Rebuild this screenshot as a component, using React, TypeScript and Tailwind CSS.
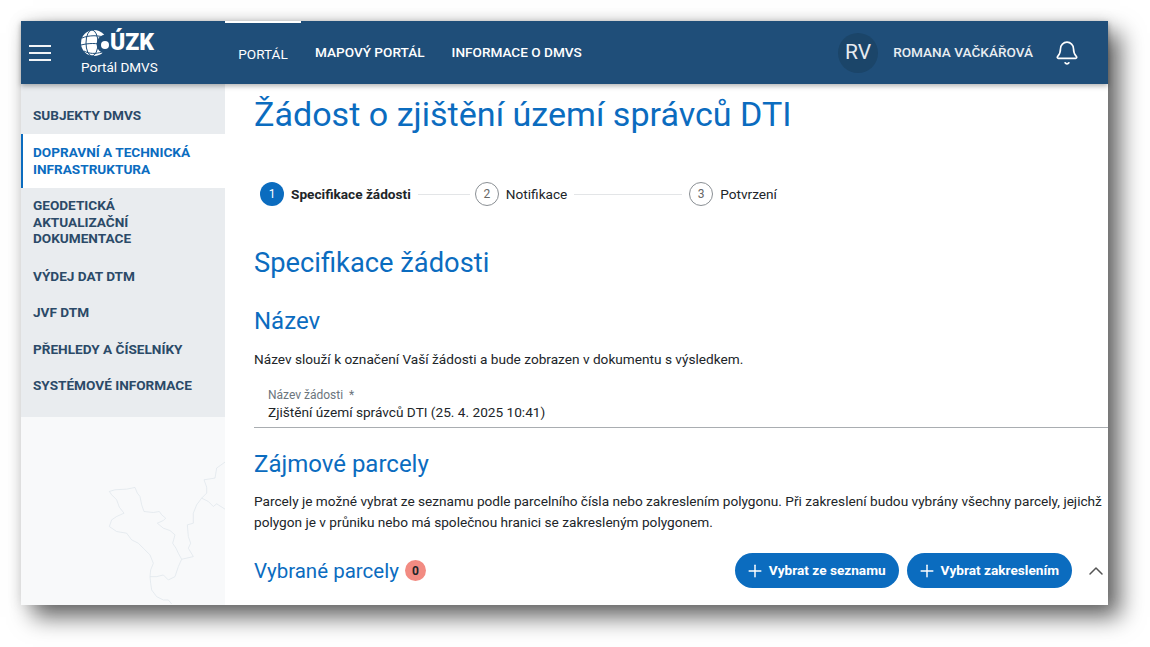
import { Bell, ChevronUp, Plus } from "lucide-react";

const sideItems = [
    { label: ["SUBJEKTY DMVS"] },
    { label: ["DOPRAVNÍ A TECHNICKÁ", "INFRASTRUKTURA"], active: true },
    { label: ["GEODETICKÁ", "AKTUALIZAČNÍ", "DOKUMENTACE"] },
    { label: ["VÝDEJ DAT DTM"] },
    { label: ["JVF DTM"] },
    { label: ["PŘEHLEDY A ČÍSELNÍKY"] },
    { label: ["SYSTÉMOVÉ INFORMACE"] },
];

function Logo() {
    return (
        <svg width="29" height="26" viewBox="0 0 29 26" className="shrink-0">
            <circle cx="13" cy="13" r="13" fill="#fff" />
            <g fill="none" stroke="#1f4e79" strokeWidth="1">
                <ellipse cx="11" cy="13" rx="6" ry="13" />
                <path d="M1 8 C8 5 18 5 25 8" />
                <path d="M0 15 C8 13 16 13 22 15" />
                <path d="M3 21 C8 24 15 24 21 22" />
            </g>
            <circle cx="25" cy="14" r="9.5" fill="#1f4e79" />
            <circle cx="24" cy="15" r="4" fill="#fff" />
        </svg>
    );
}

function Step({ n, text, current }: { n: number; text: string; current?: boolean }) {
    return (
        <div className="flex items-center gap-[7px]">
            <div
                className={
                    current
                        ? "flex h-6 w-6 items-center justify-center rounded-full bg-[#0b6cbf] text-xs text-white"
                        : "flex h-6 w-6 items-center justify-center rounded-full border border-[#8a8f94] text-xs text-[#666]"
                }
            >
                {n}
            </div>
            <span className={current ? "text-[13.65px] font-bold text-[#212529]" : "text-[13.65px] text-[#212529]"}>{text}</span>
        </div>
    );
}

function AddButton({ text }: { text: string }) {
    return (
        <button className="flex h-[35px] items-center gap-[4px] rounded-full bg-[#0b6cbf] pl-[10px] pr-[13px] text-[13.65px] font-bold text-white">
            <Plus size={20} strokeWidth={1.75} />
            {text}
        </button>
    );
}

export default function App() {
    return (
        <div className="h-[647px] w-[1150px] overflow-hidden bg-white pl-[21px] pt-[21px] font-['Roboto',sans-serif]">
            <div className="flex h-[584px] w-[1087px] flex-col bg-white shadow-[12px_12px_22px_rgba(0,0,0,0.6),0_0_14px_rgba(0,0,0,0.1)]">
                <header className="relative z-10 flex h-[63px] shrink-0 items-center bg-[#1f4e79] text-white shadow-[0_2px_5px_rgba(0,0,0,0.3)]">
                    <div className="flex w-[204px] items-center">
                        <svg width="22" height="16" viewBox="0 0 22 16" className="ml-[8px]" stroke="#f1f4f7" strokeWidth="2">
                            <path d="M0 1 H22 M0 8 H22 M0 15 H22" />
                        </svg>
                        <div className="ml-[30px] flex flex-col">
                            <div className="flex h-[26px] items-center">
                                <Logo />
                                <span className="text-[23px] font-black leading-none">ÚZK</span>
                            </div>
                            <span className="mt-[2px] text-[13.5px] leading-[18px]">Portál DMVS</span>
                        </div>
                    </div>
                    <nav className="flex h-full text-[13.6px] font-medium">
                        <a className="flex h-full w-[76px] items-center justify-center border-t-2 border-white pt-[2px] font-normal">PORTÁL</a>
                        <a className="flex h-full items-center pl-[14px] pr-[13px]">MAPOVÝ PORTÁL</a>
                        <a className="flex h-full items-center pl-[14px] pr-[13px]">INFORMACE O DMVS</a>
                    </nav>
                    <div className="ml-auto flex items-center pr-[28px]">
                        <div className="flex h-10 w-10 items-center justify-center rounded-full bg-[#1b4569] text-[21px] text-[#e6ebf0]">RV</div>
                        <span className="ml-[15px] text-[13.6px] font-medium text-[#e9edf1]">ROMANA VAČKÁŘOVÁ</span>
                        <Bell size={26} strokeWidth={1.5} className="ml-[21px]" />
                    </div>
                </header>

                <div className="flex min-h-0 flex-1">
                    <aside className="flex w-[204px] shrink-0 flex-col bg-[#f8f9fa]">
                        <ul className="bg-[#e9ecef] pb-[12.5px] pt-[13.5px] text-[13.6px] font-bold leading-[16.5px]">
                            {sideItems.map((item) => (
                                <li
                                    key={item.label[0]}
                                    className={
                                        item.active
                                            ? "border-l-2 border-[#0b6cbf] bg-white pb-[11px] pl-[10px] pt-[10px] text-[#0b6cbf]"
                                            : item.label.length > 1
                                              ? "pb-[12px] pl-[12px] pt-[9px] text-[#2b4a68]"
                                              : "pb-[11px] pl-[12px] pt-[9px] text-[#2b4a68]"
                                    }
                                >
                                    {item.label.map((line) => (
                                        <div key={line}>{line}</div>
                                    ))}
                                </li>
                            ))}
                        </ul>
                        <svg viewBox="63 52 612 563" className="min-h-0 w-full flex-1" preserveAspectRatio="none">
                            <g fill="none" stroke="#dde4ea" strokeWidth="2" strokeLinejoin="round">
                                <path d="M328 275 L345 270 L380 268 L405 263 L412 280 L420 290 L425 315 L432 335 L460 338 L478 335 L485 345 L497 355 L490 362 L472 370 L490 385 L510 392 L525 405 L518 430 L528 445 L535 460 L545 478 L535 500 L525 530 L505 540 L490 525 L470 530 L450 530 L452 550 L455 570 L470 590 L490 600 L505 600 L515 612" />
                                <path d="M328 275 L335 285 L350 300 L358 322 L372 340 L350 350 L335 360 L328 380 L350 395 L380 400 L395 420 L415 430 L430 445 L450 465 L460 490 L452 510 L450 530" />
                                <path d="M675 187 L650 205 L645 235 L612 240 L620 262 L620 280 L605 295 L590 315 L580 340 L580 370 L562 375 L565 410 L572 430 L565 445 L580 470 L545 478" />
                                <path d="M605 295 L625 305 L640 320 L650 312 L675 328" />
                            </g>
                        </svg>
                    </aside>

                    <main className="min-w-0 flex-1 overflow-hidden pl-[29px] text-[#212529]">
                        <h1 className="mt-[8px] whitespace-nowrap text-[34.1px] leading-[44px] text-[#0b6cbf]">Žádost o zjištění území správců DTI</h1>

                        <div className="ml-[6px] mt-[46px] flex h-6 w-[517px] items-center">
                            <Step n={1} text="Specifikace žádosti" current />
                            <div className="ml-[7px] mr-[5px] h-px w-[52px] bg-[#e3e5e7]" />
                            <Step n={2} text="Notifikace" />
                            <div className="ml-[7px] mr-[7px] h-px flex-1 bg-[#e3e5e7]" />
                            <Step n={3} text="Potvrzení" />
                        </div>

                        <h2 className="mt-[39px] text-[27.3px] leading-[36px] text-[#0b6cbf]">Specifikace žádosti</h2>
                        <h3 className="mt-[25px] text-2xl leading-[30px] text-[#0b6cbf]">Název</h3>
                        <p className="mt-[13px] whitespace-nowrap text-[13.65px] leading-[21px]">Název slouží k označení Vaší žádosti a bude zobrazen v dokumentu s výsledkem.</p>

                        <div className="mt-[17px] border-b border-[#a9adb1] pb-[5px] pl-[14px]">
                            <div className="text-xs leading-[16px] text-[#6c757d]">Název žádosti&nbsp; *</div>
                            <div className="text-[13.65px] leading-[19px]">Zjištění území správců DTI (25. 4. 2025 10:41)</div>
                        </div>

                        <h3 className="mt-[21px] text-2xl leading-[30px] text-[#0b6cbf]">Zájmové parcely</h3>
                        <p className="mt-[12px] whitespace-nowrap text-[13.65px] leading-[21px]">
                            Parcely je možné vybrat ze seznamu podle parcelního čísla nebo zakreslením polygonu. Při zakreslení budou vybrány všechny parcely, jejichž
                            <br />
                            polygon je v průniku nebo má společnou hranici se zakresleným polygonem.
                        </p>

                        <div className="mt-[20px] flex h-[35px] items-center">
                            <h4 className="text-[20.5px] leading-[28px] text-[#0b6cbf]">Vybrané parcely</h4>
                            <span className="ml-[6px] flex h-[21px] w-[21px] items-center justify-center rounded-full bg-[#f28b82] text-xs font-bold text-[#212529]">0</span>
                            <div className="ml-auto flex items-center gap-[8px]">
                                <AddButton text="Vybrat ze seznamu" />
                                <AddButton text="Vybrat zakreslením" />
                                <ChevronUp size={24} strokeWidth={1.5} className="ml-[4px] text-[#555]" />
                            </div>
                        </div>
                    </main>
                </div>
            </div>
        </div>
    );
}
